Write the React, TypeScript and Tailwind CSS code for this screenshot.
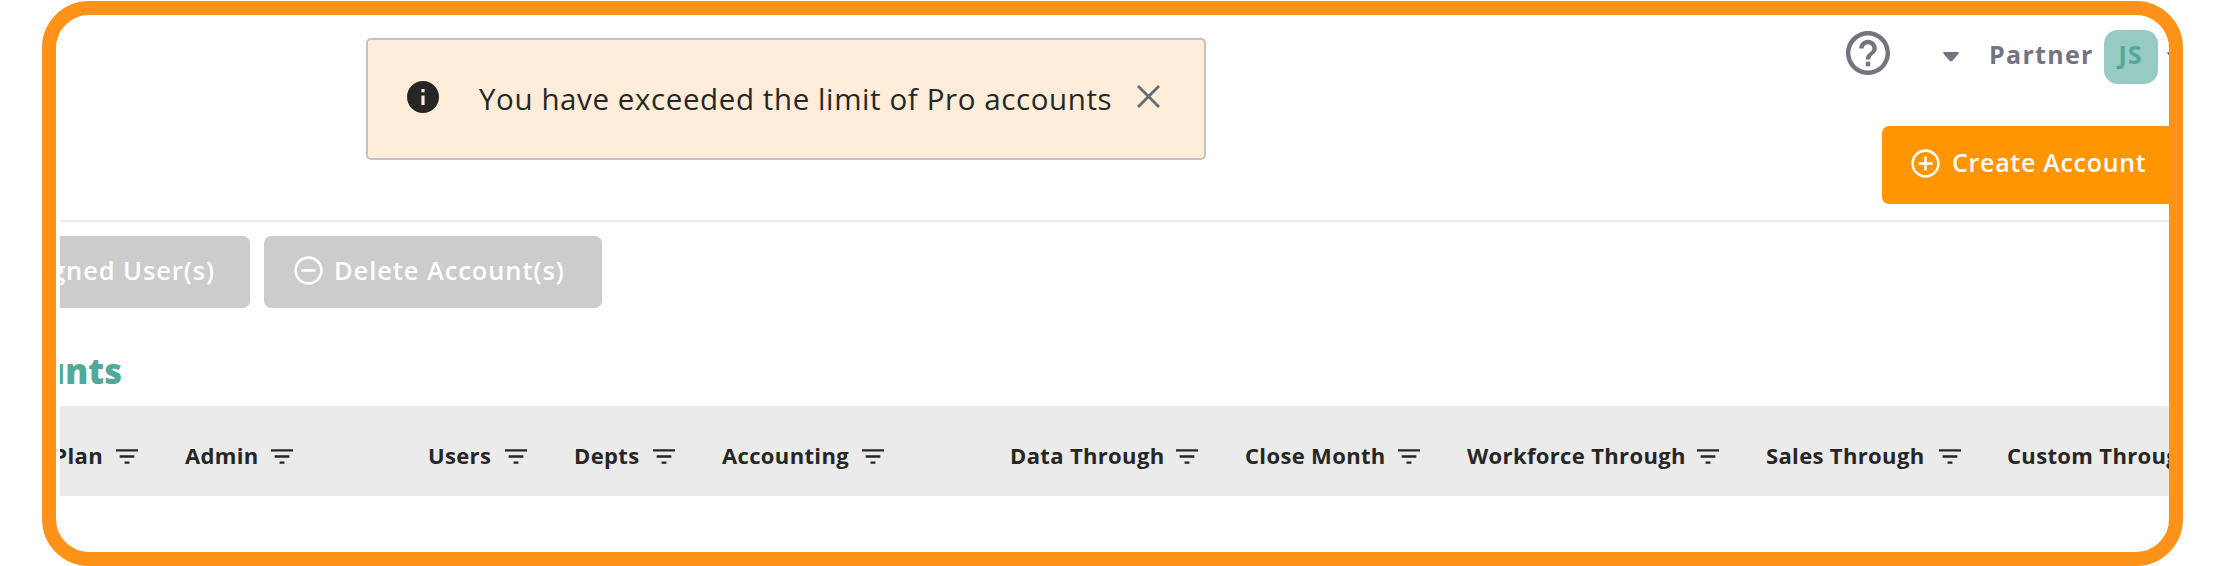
import { clsx } from "clsx";

const columns = [
    { label: "Admin", cell: "w-[243px]", text: "w-[73px]" },
    { label: "Users", cell: "w-[146px]", text: "w-[64px]" },
    { label: "Depts", cell: "w-[148px]", text: "w-[66px]" },
    { label: "Accounting", cell: "w-[288px]", text: "w-[127px]" },
    { label: "Data Through", cell: "w-[235px]", text: "w-[153px]" },
    { label: "Close Month", cell: "w-[222px]", text: "w-[140px]" },
    { label: "Workforce Through", cell: "w-[299px]", text: "w-[217px]" },
    { label: "Sales Through", cell: "w-[241px]", text: "w-[160px]" },
    { label: "Custom Through", cell: "w-[260px]", text: "w-[180px]" },
];

function FilterIcon() {
    return (
        <svg viewBox="3 6 18 12" className="w-[22px] h-[15px] shrink-0" fill="currentColor">
            <path d="M10 18h4v-2h-4v2zM3 6v2h18V6H3zm3 7h12v-2H6v2z" />
        </svg>
    );
}

function InfoIcon() {
    return (
        <svg viewBox="2 2 20 20" className="w-8 h-8 shrink-0" fill="currentColor">
            <path d="M12 2C6.48 2 2 6.48 2 12s4.48 10 10 10 10-4.48 10-10S17.52 2 12 2zm1 15h-2v-6h2v6zm0-8h-2V7h2v2z" />
        </svg>
    );
}

function HelpIcon() {
    return (
        <svg viewBox="2 2 20 20" className="w-11 h-11 shrink-0" fill="currentColor">
            <path d="M11 18h2v-2h-2v2zm1-16C6.48 2 2 6.48 2 12s4.48 10 10 10 10-4.48 10-10S17.52 2 12 2zm0 18c-4.41 0-8-3.59-8-8s3.59-8 8-8 8 3.59 8 8-3.59 8-8 8zm0-14c-2.21 0-4 1.79-4 4h2c0-1.1.9-2 2-2s2 .9 2 2c0 2-3 1.75-3 5h2c0-2.25 3-2.5 3-5 0-2.21-1.79-4-4-4z" />
        </svg>
    );
}

function Caret() {
    return (
        <svg viewBox="0 0 16 10" className="w-4 h-[10px] shrink-0" fill="currentColor">
            <path d="M1 0h14q1.4.7.4 1.9L9.4 8.7Q8 10 6.6 8.7L.6 1.900Q-.4.7 1 0z" />
        </svg>
    );
}

function CircleIcon({ plus }: { plus?: boolean }) {
    return (
        <svg viewBox="0 0 29 29" className="w-[29px] h-[29px] shrink-0" fill="none" stroke="currentColor" strokeWidth="2.6">
            <circle cx="14.5" cy="14.5" r="12.9" />
            <path d={plus ? "M7.5 14.5h14M14.5 7.5v14" : "M7.5 14.5h14"} />
        </svg>
    );
}

function Alert() {
    return (
        <div className="ml-[306px] mt-[23px] flex h-[122px] w-[840px] shrink-0 items-center rounded-[5px] border-2 border-[#bfc4c8] bg-[#ffedd9] pl-[39px] text-[#262626]">
            <div className="-mt-[5px]">
                <InfoIcon />
            </div>
            <p className="ml-10 w-[632px] whitespace-nowrap text-[29.5px] leading-[40px] tracking-[0.6px]">
                You have exceeded the limit of Pro accounts
            </p>
            <svg viewBox="0 0 23 23" className="ml-[26px] -mt-[5px] h-[23px] w-[23px]" stroke="#5f6b75" strokeWidth="2.8">
                <path d="M1 1l21 21M22 1L1 22" />
            </svg>
        </div>
    );
}

export default function App() {
    return (
        <div className="h-[566px] w-[2224px] overflow-hidden bg-white pl-[42px] pt-px font-['Open_Sans',sans-serif]">
            <div className="h-[564.5px] w-[2140.5px] overflow-hidden rounded-[47px] border-[14px] border-[#ff931a] pl-1">
                <div className="w-[2200px] overflow-hidden">
                    <header className="flex h-[207px] border-b-2 border-[#ebebeb]">
                        <Alert />
                        <div className="ml-auto flex w-[524px] shrink-0 flex-col">
                            <div className="mt-[15px] flex h-[54px] items-center pl-[110px] text-[#747380]">
                                <div className="-mt-2">
                                    <HelpIcon />
                                </div>
                                <div className="ml-[53px]">
                                    <Caret />
                                </div>
                                <span className="-mt-[5px] ml-[30px] w-[115px] whitespace-nowrap text-[25px] font-bold tracking-[1.3px]">
                                    Partner
                                </span>
                                <div className="flex h-[54px] w-[54px] items-center justify-center rounded-[14px] bg-[#96cac2] pb-[5px] pr-px text-[25px] font-bold tracking-[1px] text-[#53a999]">
                                    JS
                                </div>
                                <div className="ml-[9px]">
                                    <Caret />
                                </div>
                            </div>
                            <button className="ml-[146px] mt-[42px] flex h-[78px] w-[310px] items-center whitespace-nowrap rounded-[7px] bg-[#ff9500] pb-[4px] pl-[29px] text-[25px] font-semibold tracking-[0.7px] text-white">
                                <CircleIcon plus />
                                <span className="ml-[12px]">Create Account</span>
                            </button>
                        </div>
                    </header>

                    <div className="mt-[14px] flex gap-[14px] text-[25.5px] font-semibold tracking-[0.9px] text-white">
                        <button className="flex h-[72px] w-[190px] items-center justify-end whitespace-nowrap rounded-r-[7px] bg-[#ccc] pb-[4px] pr-[35px]">
                            Unassigned User(s)
                        </button>
                        <button className="flex h-[72px] w-[338px] items-center whitespace-nowrap rounded-[7px] bg-[#ccc] pb-[4px] pl-[30px]">
                            <CircleIcon />
                            <span className="ml-[11px]">Delete Account(s)</span>
                        </button>
                    </div>

                    <h2 className="mt-[43px] flex h-[55px] w-[62px] justify-end whitespace-nowrap text-[34.5px] font-extrabold leading-[40px] text-[#53a999]">
                        Accounts
                    </h2>

                    <div className="flex h-[90px] items-center bg-[#ebebeb] pt-[10px] text-[22px] font-bold tracking-[0.35px] text-[#262626]">
                        <div className="flex w-[125px] shrink-0 items-center">
                            <span className="-mt-[2px] flex w-[43px] justify-end whitespace-nowrap">Plan</span>
                            <div className="ml-[13px]">
                                <FilterIcon />
                            </div>
                        </div>
                        {columns.map((col) => (
                            <div key={col.label} className={clsx("flex shrink-0 items-center gap-[13px]", col.cell)}>
                                <span className={clsx("-mt-[2px] whitespace-nowrap", col.text)}>{col.label}</span>
                                <FilterIcon />
                            </div>
                        ))}
                    </div>
                </div>
            </div>
        </div>
    );
}
